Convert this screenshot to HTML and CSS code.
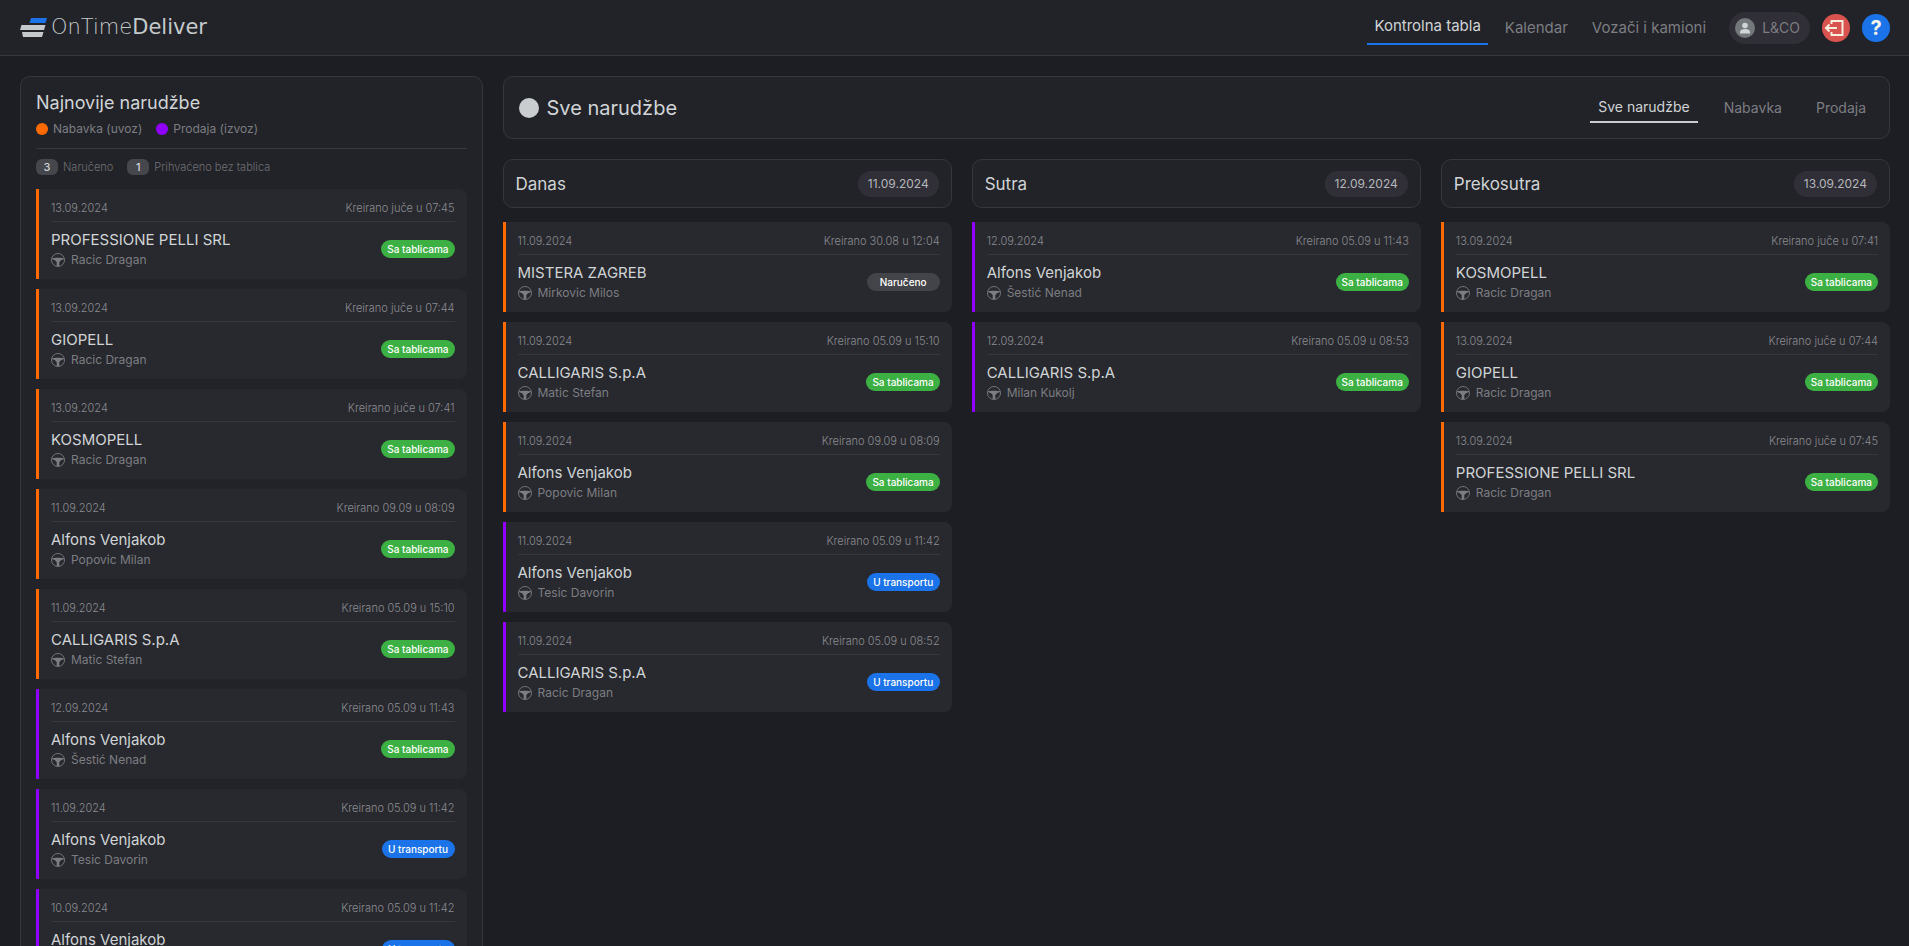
FILE: index.html
```html
<!DOCTYPE html>
<html lang="sr-Latn">
<head>
<meta charset="utf-8">
<meta name="viewport" content="width=device-width, initial-scale=1">
<title>OnTimeDeliver</title>
<link rel="stylesheet" href="styles.css">
</head>
<body>
<svg class="symbols" aria-hidden="true">
  <symbol id="wheel" viewBox="0 0 14 14">
    <circle cx="7" cy="7" r="6.500" fill="none" stroke="currentColor" stroke-width="0.900"/>
    <path d="M1 5.300L5 4.800H9L13 5.300V6L10 7.300L8.300 9V13H5.700V9L4 7.300L1 6Z" fill="currentColor"/>
  </symbol>
</svg>

<header class="topbar">
  <a class="brand" href="#">
    <svg class="brand-mark" viewBox="0 0 28 20" aria-hidden="true">
      <path d="M11 0H27L25.500 5H9.500Z" fill="#1a73e8"/>
      <path d="M1.500 7H25.500L24 12H0Z" fill="#c4cacc"/>
      <path d="M2 14H23.500L22 19H3Z" fill="#c4cacc"/>
    </svg>
    <span class="brand-name">OnTime<span class="brand-strong">Deliver</span></span>
  </a>
  <nav class="nav">
    <a class="nav-link active" href="#">Kontrolna tabla</a>
    <a class="nav-link" href="#">Kalendar</a>
    <a class="nav-link" href="#">Vozači i kamioni</a>
  </nav>
  <div class="tools">
    <button class="account" type="button">
      <svg class="avatar" viewBox="0 0 20 20" aria-hidden="true">
        <circle cx="10" cy="10" r="10" fill="#73797b"/>
        <circle cx="10" cy="7.500" r="2.800" fill="#d0d4d6"/>
        <path d="M5 15.500V14C5 12 7 11 10 11S15 12 15 14V15.500Z" fill="#d0d4d6"/>
      </svg>
      L&amp;CO
    </button>
    <button class="round logout" type="button" aria-label="Odjava">
      <svg viewBox="0 0 28 28" aria-hidden="true">
        <path d="M9.500 10V7H20.500V21H9.500V18M15 14H4M7.500 10.500L4 14L7.500 17.500" fill="none" stroke="#f8eedd" stroke-width="2"/>
      </svg>
    </button>
    <button class="round help" type="button">?</button>
  </div>
</header>

<main class="layout">
  <aside class="panel sidebar">
    <h1 class="side-title">Najnovije narudžbe</h1>
    <div class="legend">
      <span class="legend-item"><i class="dot import"></i>Nabavka (uvoz)</span>
      <span class="legend-item"><i class="dot export"></i>Prodaja (izvoz)</span>
    </div>
    <div class="counts">
      <span class="count-item"><b class="count">3</b>Naručeno</span>
      <span class="count-item"><b class="count">1</b>Prihvaćeno bez tablica</span>
    </div>
    <div class="cards">
      <article class="card import"><div class="meta"><time>13.09.2024</time><span>Kreirano juče u 07:45</span></div><div class="info"><div><h3 class="client">PROFESSIONE PELLI SRL</h3><p class="driver"><svg class="wheel"><use href="#wheel"/></svg>Racic Dragan</p></div><span class="badge plated">Sa tablicama</span></div></article>
      <article class="card import"><div class="meta"><time>13.09.2024</time><span>Kreirano juče u 07:44</span></div><div class="info"><div><h3 class="client">GIOPELL</h3><p class="driver"><svg class="wheel"><use href="#wheel"/></svg>Racic Dragan</p></div><span class="badge plated">Sa tablicama</span></div></article>
      <article class="card import"><div class="meta"><time>13.09.2024</time><span>Kreirano juče u 07:41</span></div><div class="info"><div><h3 class="client">KOSMOPELL</h3><p class="driver"><svg class="wheel"><use href="#wheel"/></svg>Racic Dragan</p></div><span class="badge plated">Sa tablicama</span></div></article>
      <article class="card import"><div class="meta"><time>11.09.2024</time><span>Kreirano 09.09 u 08:09</span></div><div class="info"><div><h3 class="client">Alfons Venjakob</h3><p class="driver"><svg class="wheel"><use href="#wheel"/></svg>Popovic Milan</p></div><span class="badge plated">Sa tablicama</span></div></article>
      <article class="card import"><div class="meta"><time>11.09.2024</time><span>Kreirano 05.09 u 15:10</span></div><div class="info"><div><h3 class="client">CALLIGARIS S.p.A</h3><p class="driver"><svg class="wheel"><use href="#wheel"/></svg>Matic Stefan</p></div><span class="badge plated">Sa tablicama</span></div></article>
      <article class="card export"><div class="meta"><time>12.09.2024</time><span>Kreirano 05.09 u 11:43</span></div><div class="info"><div><h3 class="client">Alfons Venjakob</h3><p class="driver"><svg class="wheel"><use href="#wheel"/></svg>Šestić Nenad</p></div><span class="badge plated">Sa tablicama</span></div></article>
      <article class="card export"><div class="meta"><time>11.09.2024</time><span>Kreirano 05.09 u 11:42</span></div><div class="info"><div><h3 class="client">Alfons Venjakob</h3><p class="driver"><svg class="wheel"><use href="#wheel"/></svg>Tesic Davorin</p></div><span class="badge transit">U transportu</span></div></article>
      <article class="card export"><div class="meta"><time>10.09.2024</time><span>Kreirano 05.09 u 11:42</span></div><div class="info"><div><h3 class="client">Alfons Venjakob</h3><p class="driver"><svg class="wheel"><use href="#wheel"/></svg>Tesic Davorin</p></div><span class="badge transit">U transportu</span></div></article>
    </div>
  </aside>

  <section class="board">
    <div class="panel board-head">
      <h2 class="board-title"><i class="dot all"></i>Sve narudžbe</h2>
      <nav class="tabs">
        <a class="tab active" href="#">Sve narudžbe</a>
        <a class="tab" href="#">Nabavka</a>
        <a class="tab" href="#">Prodaja</a>
      </nav>
    </div>
    <div class="columns">
      <section>
        <div class="panel day"><h2 class="day-name">Danas</h2><time class="day-date">11.09.2024</time></div>
        <div class="cards">
          <article class="card import"><div class="meta"><time>11.09.2024</time><span>Kreirano 30.08 u 12:04</span></div><div class="info"><div><h3 class="client">MISTERA ZAGREB</h3><p class="driver"><svg class="wheel"><use href="#wheel"/></svg>Mirkovic Milos</p></div><span class="badge ordered">Naručeno</span></div></article>
          <article class="card import"><div class="meta"><time>11.09.2024</time><span>Kreirano 05.09 u 15:10</span></div><div class="info"><div><h3 class="client">CALLIGARIS S.p.A</h3><p class="driver"><svg class="wheel"><use href="#wheel"/></svg>Matic Stefan</p></div><span class="badge plated">Sa tablicama</span></div></article>
          <article class="card import"><div class="meta"><time>11.09.2024</time><span>Kreirano 09.09 u 08:09</span></div><div class="info"><div><h3 class="client">Alfons Venjakob</h3><p class="driver"><svg class="wheel"><use href="#wheel"/></svg>Popovic Milan</p></div><span class="badge plated">Sa tablicama</span></div></article>
          <article class="card export"><div class="meta"><time>11.09.2024</time><span>Kreirano 05.09 u 11:42</span></div><div class="info"><div><h3 class="client">Alfons Venjakob</h3><p class="driver"><svg class="wheel"><use href="#wheel"/></svg>Tesic Davorin</p></div><span class="badge transit">U transportu</span></div></article>
          <article class="card export"><div class="meta"><time>11.09.2024</time><span>Kreirano 05.09 u 08:52</span></div><div class="info"><div><h3 class="client">CALLIGARIS S.p.A</h3><p class="driver"><svg class="wheel"><use href="#wheel"/></svg>Racic Dragan</p></div><span class="badge transit">U transportu</span></div></article>
        </div>
      </section>
      <section>
        <div class="panel day"><h2 class="day-name">Sutra</h2><time class="day-date">12.09.2024</time></div>
        <div class="cards">
          <article class="card export"><div class="meta"><time>12.09.2024</time><span>Kreirano 05.09 u 11:43</span></div><div class="info"><div><h3 class="client">Alfons Venjakob</h3><p class="driver"><svg class="wheel"><use href="#wheel"/></svg>Šestić Nenad</p></div><span class="badge plated">Sa tablicama</span></div></article>
          <article class="card export"><div class="meta"><time>12.09.2024</time><span>Kreirano 05.09 u 08:53</span></div><div class="info"><div><h3 class="client">CALLIGARIS S.p.A</h3><p class="driver"><svg class="wheel"><use href="#wheel"/></svg>Milan Kukolj</p></div><span class="badge plated">Sa tablicama</span></div></article>
        </div>
      </section>
      <section>
        <div class="panel day"><h2 class="day-name">Prekosutra</h2><time class="day-date">13.09.2024</time></div>
        <div class="cards">
          <article class="card import"><div class="meta"><time>13.09.2024</time><span>Kreirano juče u 07:41</span></div><div class="info"><div><h3 class="client">KOSMOPELL</h3><p class="driver"><svg class="wheel"><use href="#wheel"/></svg>Racic Dragan</p></div><span class="badge plated">Sa tablicama</span></div></article>
          <article class="card import"><div class="meta"><time>13.09.2024</time><span>Kreirano juče u 07:44</span></div><div class="info"><div><h3 class="client">GIOPELL</h3><p class="driver"><svg class="wheel"><use href="#wheel"/></svg>Racic Dragan</p></div><span class="badge plated">Sa tablicama</span></div></article>
          <article class="card import"><div class="meta"><time>13.09.2024</time><span>Kreirano juče u 07:45</span></div><div class="info"><div><h3 class="client">PROFESSIONE PELLI SRL</h3><p class="driver"><svg class="wheel"><use href="#wheel"/></svg>Racic Dragan</p></div><span class="badge plated">Sa tablicama</span></div></article>
        </div>
      </section>
    </div>
  </section>
</main>
</body>
</html>
```
FILE: styles.css
```css
:root {
  --bg: #1d1e23;
  --panel: #222328;
  --card: #28292e;
  --line: #36373c;
  --pill: #302f37;
  --text: #d0d4d6;
  --muted: #7c7d82;
  --blue: #1a73e8;
  --green: #3cb043;
  --orange: #ff6a00;
  --purple: #8f00ff;
}

* { box-sizing: border-box; }

body {
  height: 100vh;
  margin: 0;
  overflow: hidden;
  background: var(--bg);
  color: var(--text);
  font-family: Inter, "Liberation Sans", sans-serif;
  font-size: 12px;
}

h1, h2, h3, p { margin: 0; font-weight: 400; }
a { color: inherit; text-decoration: none; }
button { border: 0; padding: 0; font: inherit; color: inherit; cursor: pointer; }
.symbols { display: none; }

/* Top bar */
.topbar {
  display: flex;
  align-items: center;
  height: 56px;
  padding: 0 19px 0 20px;
  background: var(--panel);
  border-bottom: 1px solid var(--line);
}
.brand { display: flex; align-items: center; gap: 3px; margin-right: auto; }
.brand-mark { width: 28px; height: 20px; }
.brand-name {
  padding-bottom: 2px;
  font-family: "DejaVu Sans", Inter, sans-serif;
  font-size: 21px;
  line-height: 22px;
  font-weight: 200;
  color: #c4cacc;
}
.brand-strong { font-weight: 400; }

.nav { display: flex; align-items: center; gap: 10px; }
.nav-link { padding: 0 7px; font-size: 15px; line-height: 32px; color: var(--muted); }
.nav-link.active {
  padding-bottom: 1px;
  border-bottom: 2px solid var(--blue);
  color: var(--text);
}

.tools { display: flex; align-items: center; gap: 12px; margin-left: 16px; }
.account {
  display: flex;
  align-items: center;
  gap: 7px;
  height: 32px;
  padding: 0 10px 0 6px;
  border-radius: 16px;
  background: var(--pill);
  color: var(--muted);
  font-size: 14px;
}
.avatar { width: 20px; height: 20px; }
.round { width: 28px; height: 28px; border-radius: 50%; }
.round svg { display: block; width: 28px; height: 28px; }
.logout { background: #d9534f; }
.help { background: var(--blue); color: #f4f4ec; font-size: 20px; font-weight: 700; }

/* Page layout */
.layout { display: grid; grid-template-columns: 1fr 3fr; gap: 20px; padding: 20px 19px 20px 20px; }
.panel { background: var(--panel); border: 1px solid var(--line); border-radius: 10px; }
.dot { display: block; width: 12px; height: 12px; border-radius: 50%; }
.dot.import { background: var(--orange); }
.dot.export { background: var(--purple); }
.dot.all { width: 20px; height: 20px; background: #c9cdd0; }

/* Sidebar */
.sidebar { padding: 15px; }
.side-title { font-size: 18px; line-height: 22px; }
.legend { display: flex; gap: 14px; padding: 6px 0 10px; border-bottom: 1px solid var(--line); }
.legend-item { display: flex; align-items: center; gap: 5px; font-size: 12px; line-height: 18px; color: var(--muted); }
.counts { display: flex; gap: 14px; padding: 10px 0 14px; }
.count-item { display: flex; align-items: center; gap: 5px; font-size: 11px; line-height: 16px; font-weight: 300; color: #6e6f74; }
.count { width: 22px; border-radius: 6px; background: #46474c; color: var(--text); font-weight: 500; text-align: center; }

/* Order cards */
.cards { display: grid; gap: 10px; }
.card {
  padding: 10px 12px;
  border-left: 3px solid;
  border-radius: 0 8px 8px 0;
  background: var(--card);
}
.card.import { border-color: var(--orange); }
.card.export { border-color: var(--purple); }
.meta {
  display: flex;
  justify-content: space-between;
  padding-bottom: 4px;
  border-bottom: 1px solid #36373c;
  font-size: 11px;
  line-height: 18px;
  font-weight: 300;
  color: #8a8b90;
}
.info { display: flex; align-items: center; justify-content: space-between; padding-top: 7px; }
.client { font-size: 15px; line-height: 22px; }
.driver { display: flex; align-items: center; gap: 6px; font-size: 12px; line-height: 18px; color: var(--muted); }
.wheel { width: 14px; height: 14px; }
.badge {
  min-width: 73px;
  padding: 0 6px;
  border-radius: 9px;
  color: #fff;
  font-size: 10px;
  line-height: 18px;
  font-weight: 500;
  text-align: center;
}
.badge.plated { background: var(--green); }
.badge.transit { background: var(--blue); }
.badge.ordered { background: #434449; }

/* Board */
.board-head { display: flex; align-items: center; justify-content: space-between; min-height: 63px; padding: 0 15px; }
.board-title { display: flex; align-items: center; gap: 8px; font-size: 20px; line-height: 24px; }
.tabs { display: flex; align-items: center; gap: 18px; }
.tab { padding: 0 8px; font-size: 14px; line-height: 29px; color: var(--muted); }
.tab.active { border-bottom: 2px solid #c9cdd0; color: var(--text); }
.columns { display: grid; grid-template-columns: repeat(3, 1fr); gap: 20px; margin-top: 20px; }
.day { display: flex; align-items: center; justify-content: space-between; min-height: 49px; margin-bottom: 14px; padding: 0 12px; }
.day-name { font-size: 17px; line-height: 20px; }
.day-date { padding: 0 10px; border-radius: 13px; background: var(--pill); font-size: 12px; line-height: 26px; color: #b4b7ba; }
```
